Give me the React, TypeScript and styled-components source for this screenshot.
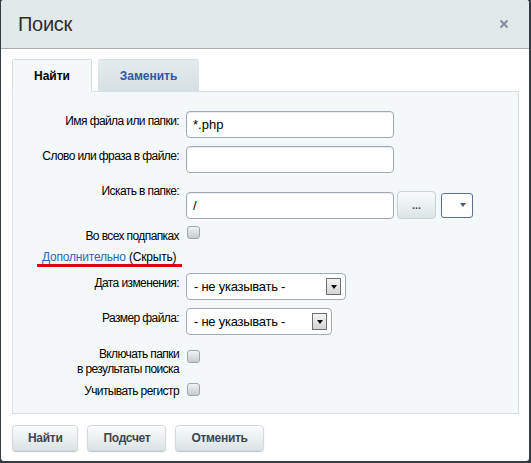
import React from "react";
import styled, { createGlobalStyle } from "styled-components";

const Global = createGlobalStyle`
  html, body {
    margin: 0;
    padding: 0;
    background: #343c43;
  }
  body {
    font-family: "Liberation Sans", Arial, sans-serif;
    font-size: 12px;
    color: #000;
  }
`;

const Dialog = styled.div`
  width: 528px;
  height: 461px;
  margin-left: 1px;
  background: #fff;
  border-radius: 3px;
  overflow: hidden;
  display: flex;
  flex-direction: column;
`;

const Header = styled.div`
  height: 48px;
  flex: none;
  display: flex;
  align-items: center;
  justify-content: space-between;
  padding: 0 20px 0 17px;
  background: #e1e9eb;
  border-bottom: 1px solid #a4acb1;
  & h1 {
    margin: 0;
    font-size: 20px;
    font-weight: normal;
    letter-spacing: -0.3px;
    color: #2e2e2e;
  }
`;

const Close = styled.div`
  width: 10px;
  height: 10px;
  display: flex;
  cursor: pointer;
`;

const Body = styled.div`
  padding: 10px 10px 0 11px;
`;

const Tabs = styled.div`
  display: flex;
  align-items: flex-end;
  gap: 6px;
`;

const Tab = styled.div<{ $active?: boolean }>`
  height: ${(p) => (p.$active ? "33px" : "32px")};
  width: ${(p) => (p.$active ? "80px" : "101px")};
  box-sizing: border-box;
  display: flex;
  align-items: center;
  justify-content: center;
  font-weight: bold;
  font-size: 12px;
  color: ${(p) => (p.$active ? "#000" : "#2c58ab")};
  background: ${(p) =>
    p.$active ? "#f5f8f9" : "linear-gradient(#e4ebed, #d6dfe2)"};
  border: 1px solid ${(p) => (p.$active ? "#d3dee4" : "transparent")};
  border-bottom: none;
  border-radius: 2px 2px 0 0;
  position: relative;
  margin-bottom: ${(p) => (p.$active ? "-1px" : "0")};
  z-index: ${(p) => (p.$active ? 1 : 0)};
`;

const Panel = styled.div`
  background: #f5f8f9;
  border: 1px solid #d6e1e7;
  padding: 19px 0 14px 0;
`;

const Row = styled.div<{ $mt?: number }>`
  display: flex;
  align-items: flex-start;
  margin-top: ${(p) => p.$mt ?? 0}px;
`;

const Label = styled.div<{ $pt?: number }>`
  width: 166px;
  margin-right: 7px;
  flex: none;
  text-align: right;
  line-height: 15px;
  letter-spacing: -0.6px;
  padding-top: ${(p) => p.$pt ?? 0}px;
`;

const Controls = styled.div<{ $mt?: number }>`
  display: flex;
  align-items: center;
  margin-top: ${(p) => p.$mt ?? 0}px;
`;

const Input = styled.input`
  width: 208px;
  height: 27px;
  box-sizing: border-box;
  border: 1px solid #a1aab2;
  border-radius: 4px;
  box-shadow: inset 0 1px 1px rgba(0, 0, 0, 0.08);
  background: #fff;
  padding: 0 6px;
  font-family: "Liberation Sans", Arial, sans-serif;
  font-size: 13px;
  color: #000;
  outline: none;
`;

const DotsButton = styled.button`
  width: 39px;
  height: 28px;
  margin-left: 3px;
  border: 1px solid #c9d0d4;
  border-radius: 4px;
  background: linear-gradient(#f9fbfb, #dde4e6);
  display: flex;
  align-items: center;
  justify-content: center;
  padding: 0;
  font-family: "Liberation Sans", Arial, sans-serif;
  font-size: 11px;
  font-weight: bold;
  color: #3d4a54;
  line-height: 1;
`;

const MiniSelect = styled.div`
  width: 32px;
  height: 25px;
  margin-left: 5px;
  box-sizing: border-box;
  border: 1px solid #5d6f93;
  border-radius: 3px;
  background: #fff;
  display: flex;
  align-items: center;
  justify-content: flex-end;
  padding-right: 6px;
`;

const Caret = styled.div<{ $color: string; $w: number }>`
  width: 0;
  height: 0;
  border-left: ${(p) => p.$w / 2}px solid transparent;
  border-right: ${(p) => p.$w / 2}px solid transparent;
  border-top: ${(p) => Math.ceil(p.$w / 2)}px solid ${(p) => p.$color};
`;

const Select = styled.div<{ $w: number }>`
  width: ${(p) => p.$w}px;
  height: 27px;
  box-sizing: border-box;
  border: 1px solid #a1aab2;
  border-radius: 4px;
  background: #fff;
  display: flex;
  align-items: center;
  justify-content: space-between;
  padding: 0 4px 0 7px;
  font-size: 13px;
  letter-spacing: -0.25px;
`;

const ArrowBox = styled.div`
  width: 15px;
  height: 17px;
  box-sizing: border-box;
  border: 1px solid #6e6e6e;
  background: linear-gradient(#f4f4f4, #d4d4d4);
  display: flex;
  align-items: center;
  justify-content: center;
`;

const Check = styled.div<{ $mt?: number }>`
  width: 13px;
  height: 13px;
  box-sizing: border-box;
  margin-left: 1px;
  margin-top: ${(p) => p.$mt ?? 0}px;
  border: 1px solid #9fa6ab;
  border-radius: 3px;
  background: linear-gradient(#f1f3f4, #c6cbce);
`;

const MoreRow = styled.div`
  margin-top: 6px;
  padding-left: 24px;
`;

const More = styled.span`
  display: inline-block;
  line-height: 13px;
  padding: 0 6px 0 5px;
  border-bottom: 3px solid #e3000d;
  font-size: 12px;
  letter-spacing: -0.2px;
  & a {
    color: #2d66c3;
    text-decoration: none;
  }
`;

const Footer = styled.div`
  display: flex;
  gap: 9px;
  padding: 11px 0 0 11px;
`;

const Button = styled.button`
  height: 26px;
  padding: 0 15px;
  border: 1px solid #d3dadd;
  border-radius: 4px;
  background: linear-gradient(#fafcfc, #dce3e5);
  box-shadow: 0 1px 1px rgba(0, 0, 0, 0.25), inset 0 1px 0 #fff;
  font-family: "Liberation Sans", Arial, sans-serif;
  font-size: 12px;
  font-weight: bold;
  letter-spacing: -0.3px;
  color: #3b4853;
  cursor: pointer;
`;

export default function App() {
  return (
    <>
      <Global />
      <Dialog>
        <Header>
          <h1>Поиск</h1>
          <Close>
            <svg width="10" height="10" viewBox="0 0 10 10">
              <path
                d="M1.5 1.5 L8.5 8.5 M8.5 1.5 L1.5 8.5"
                stroke="#8390a1"
                strokeWidth="2"
              />
            </svg>
          </Close>
        </Header>
        <Body>
          <Tabs>
            <Tab $active>Найти</Tab>
            <Tab>Заменить</Tab>
          </Tabs>
          <Panel>
            <Row>
              <Label $pt={3}>Имя файла или папки:</Label>
              <Controls>
                <Input defaultValue="*.php" />
              </Controls>
            </Row>
            <Row $mt={8}>
              <Label $pt={3}>Слово или фраза в файле:</Label>
              <Controls>
                <Input />
              </Controls>
            </Row>
            <Row $mt={10}>
              <Label $pt={1}>Искать в папке:</Label>
              <Controls $mt={8}>
                <Input defaultValue="/" />
                <DotsButton>...</DotsButton>
                <MiniSelect>
                  <Caret $color="#4b5b7c" $w={7} />
                </MiniSelect>
              </Controls>
            </Row>
            <Row $mt={7}>
              <Label $pt={3}>Во всех подпапках</Label>
              <Check />
            </Row>
            <MoreRow>
              <More>
                <a href="#">Дополнительно</a> (Скрыть)
              </More>
            </MoreRow>
            <Row $mt={6}>
              <Label $pt={3}>Дата изменения:</Label>
              <Select $w={160}>
                <span>- не указывать -</span>
                <ArrowBox>
                  <Caret $color="#000" $w={7} />
                </ArrowBox>
              </Select>
            </Row>
            <Row $mt={8}>
              <Label $pt={3}>Размер файла:</Label>
              <Select $w={146}>
                <span>- не указывать -</span>
                <ArrowBox>
                  <Caret $color="#000" $w={7} />
                </ArrowBox>
              </Select>
            </Row>
            <Row $mt={12}>
              <Label>
                Включать папки
                <br />в результаты поиска
              </Label>
              <Check $mt={3} />
            </Row>
            <Row $mt={6}>
              <Label $pt={1}>Учитывать регистр</Label>
              <Check />
            </Row>
          </Panel>
        </Body>
        <Footer>
          <Button>Найти</Button>
          <Button>Подсчет</Button>
          <Button>Отменить</Button>
        </Footer>
      </Dialog>
    </>
  );
}
